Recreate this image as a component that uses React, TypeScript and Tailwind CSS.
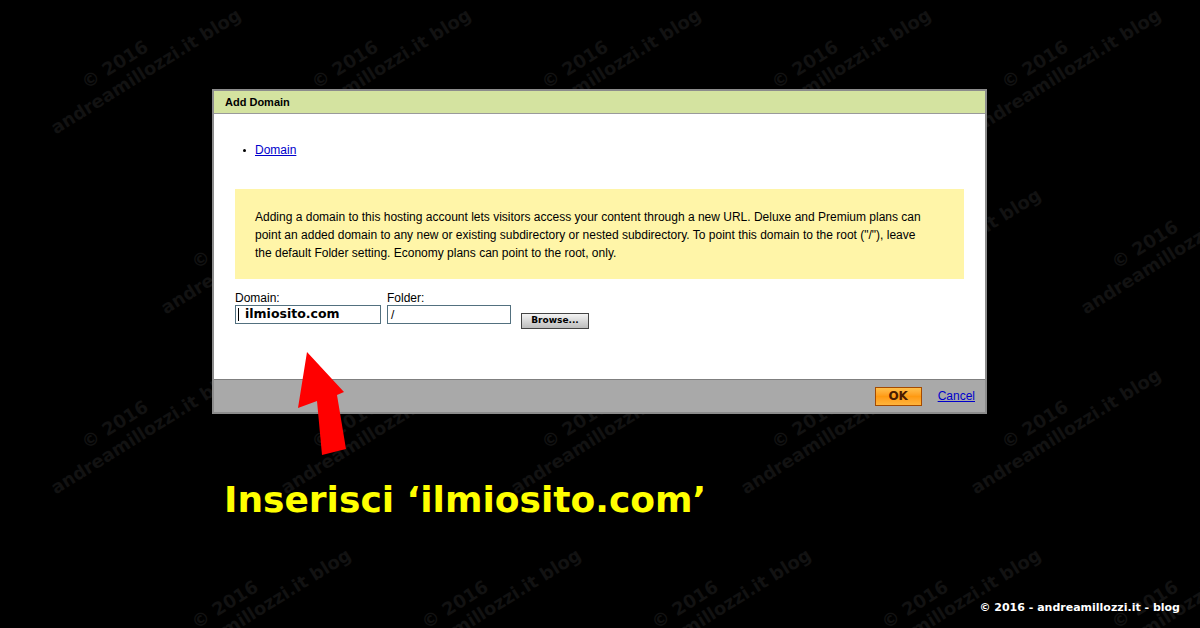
import React from "react";

const marks: { x: number; y: number }[] = [];
for (let r = 0; r < 4; r++) {
  for (let c = 0; c < 6; c++) {
    marks.push({ x: 30 + c * 230 + (r % 2) * 110, y: 40 + r * 180 });
  }
}

export default function App() {
  return (
    <div className="relative w-[1200px] h-[628px] bg-black overflow-hidden" style={{ fontFamily: "Arial, 'Liberation Sans', sans-serif" }}>
      {/* watermark */}
      {marks.map((m, i) => (
        <div
          key={i}
          className="absolute text-[#121212] font-bold text-[18px] leading-[22px] -rotate-[32deg] whitespace-nowrap pointer-events-none"
          style={{ left: m.x, top: m.y, fontFamily: "'DejaVu Sans', sans-serif" }}
        >
          <div className="pl-[50px]">© 2016</div>
          <div>andreamillozzi.it blog</div>
        </div>
      ))}

      <div className="relative pt-[89px] pl-[212px]">
        <div className="w-[775px] border-2 border-[#8c8c8c] bg-white flex flex-col">
          <div className="h-[23px] bg-[#d4e3a0] border-b border-[#9a9a9a] flex items-center px-[11px] text-[11px] font-bold text-black">
            Add Domain
          </div>
          <div className="h-[265px] flex flex-col px-[21px]">
            <div className="mt-[27px] flex items-center text-[12px] pl-[8px]">
              <span className="w-[3px] h-[3px] rounded-full bg-black mr-[9px]" />
              <span className="text-[#0000cc] underline">Domain</span>
            </div>
            <div className="mt-[30px] h-[90px] bg-[#fff5a8] px-[20px] pt-[19px] text-[12px] leading-[18px] text-black whitespace-nowrap">
              Adding a domain to this hosting account lets visitors access your content through a new URL. Deluxe and Premium plans can
              <br />
              point an added domain to any new or existing subdirectory or nested subdirectory. To point this domain to the root ("/"), leave
              <br />
              the default Folder setting. Economy plans can point to the root, only.
            </div>
            <div className="mt-[12px] flex items-end gap-[6px]">
              <div className="flex flex-col">
                <span className="text-[12px] leading-[14px] text-black">Domain:</span>
                <div className="w-[146px] h-[19px] border border-[#52707f] flex items-center pl-[2px]">
                  <span className="w-px h-[13px] bg-black mr-[6px]" />
                  <span className="text-[12.5px] font-bold text-black" style={{ fontFamily: "'DejaVu Sans', Verdana, sans-serif" }}>ilmiosito.com</span>
                </div>
              </div>
              <div className="flex flex-col">
                <span className="text-[12px] leading-[14px] text-black">Folder:</span>
                <div className="w-[124px] h-[19px] border border-[#52707f] flex items-center pl-[3px] text-[12px] text-black">/</div>
              </div>
              <button className="ml-[4px] mb-[-5px] w-[68px] h-[16px] border border-[#444] bg-gradient-to-b from-[#f4f4f4] to-[#bdbdbd] text-[9px] font-bold text-black flex items-center justify-center" style={{ fontFamily: "'DejaVu Sans', Verdana, sans-serif" }}>
                Browse...
              </button>
            </div>
          </div>
          <div className="h-[33px] bg-[#a9a9a9] border-t border-[#7f7f7f] flex items-center justify-end pr-[10px] gap-[16px]">
            <button className="w-[47px] h-[19px] border border-[#a44a00] bg-gradient-to-b from-[#ffc04a] via-[#ff9a10] to-[#ffb43a] text-[12px] font-bold text-[#4a1a00] flex items-center justify-center" style={{ fontFamily: "'DejaVu Sans', Verdana, sans-serif" }}>
              OK
            </button>
            <span className="text-[12px] text-[#0000cc] underline">Cancel</span>
          </div>
        </div>

        <div className="mt-[68px] ml-[12px] text-[#ffff00] text-[36px] font-bold leading-none" style={{ fontFamily: "'DejaVu Sans', Verdana, sans-serif" }}>
          Inserisci ‘ilmiosito.com’
        </div>
      </div>

      {/* red arrow */}
      <svg className="absolute left-[280px] top-[345px]" width="80" height="120" viewBox="0 0 80 120">
        <polygon points="27,7 18,63 37,56 42,110 66,104 57,50 64,47" fill="#ff0000" />
      </svg>

      <div className="absolute right-[20px] bottom-[12px] text-white text-[11px] font-bold" style={{ fontFamily: "'DejaVu Sans', sans-serif" }}>
        © 2016 - andreamillozzi.it - blog
      </div>
    </div>
  );
}
